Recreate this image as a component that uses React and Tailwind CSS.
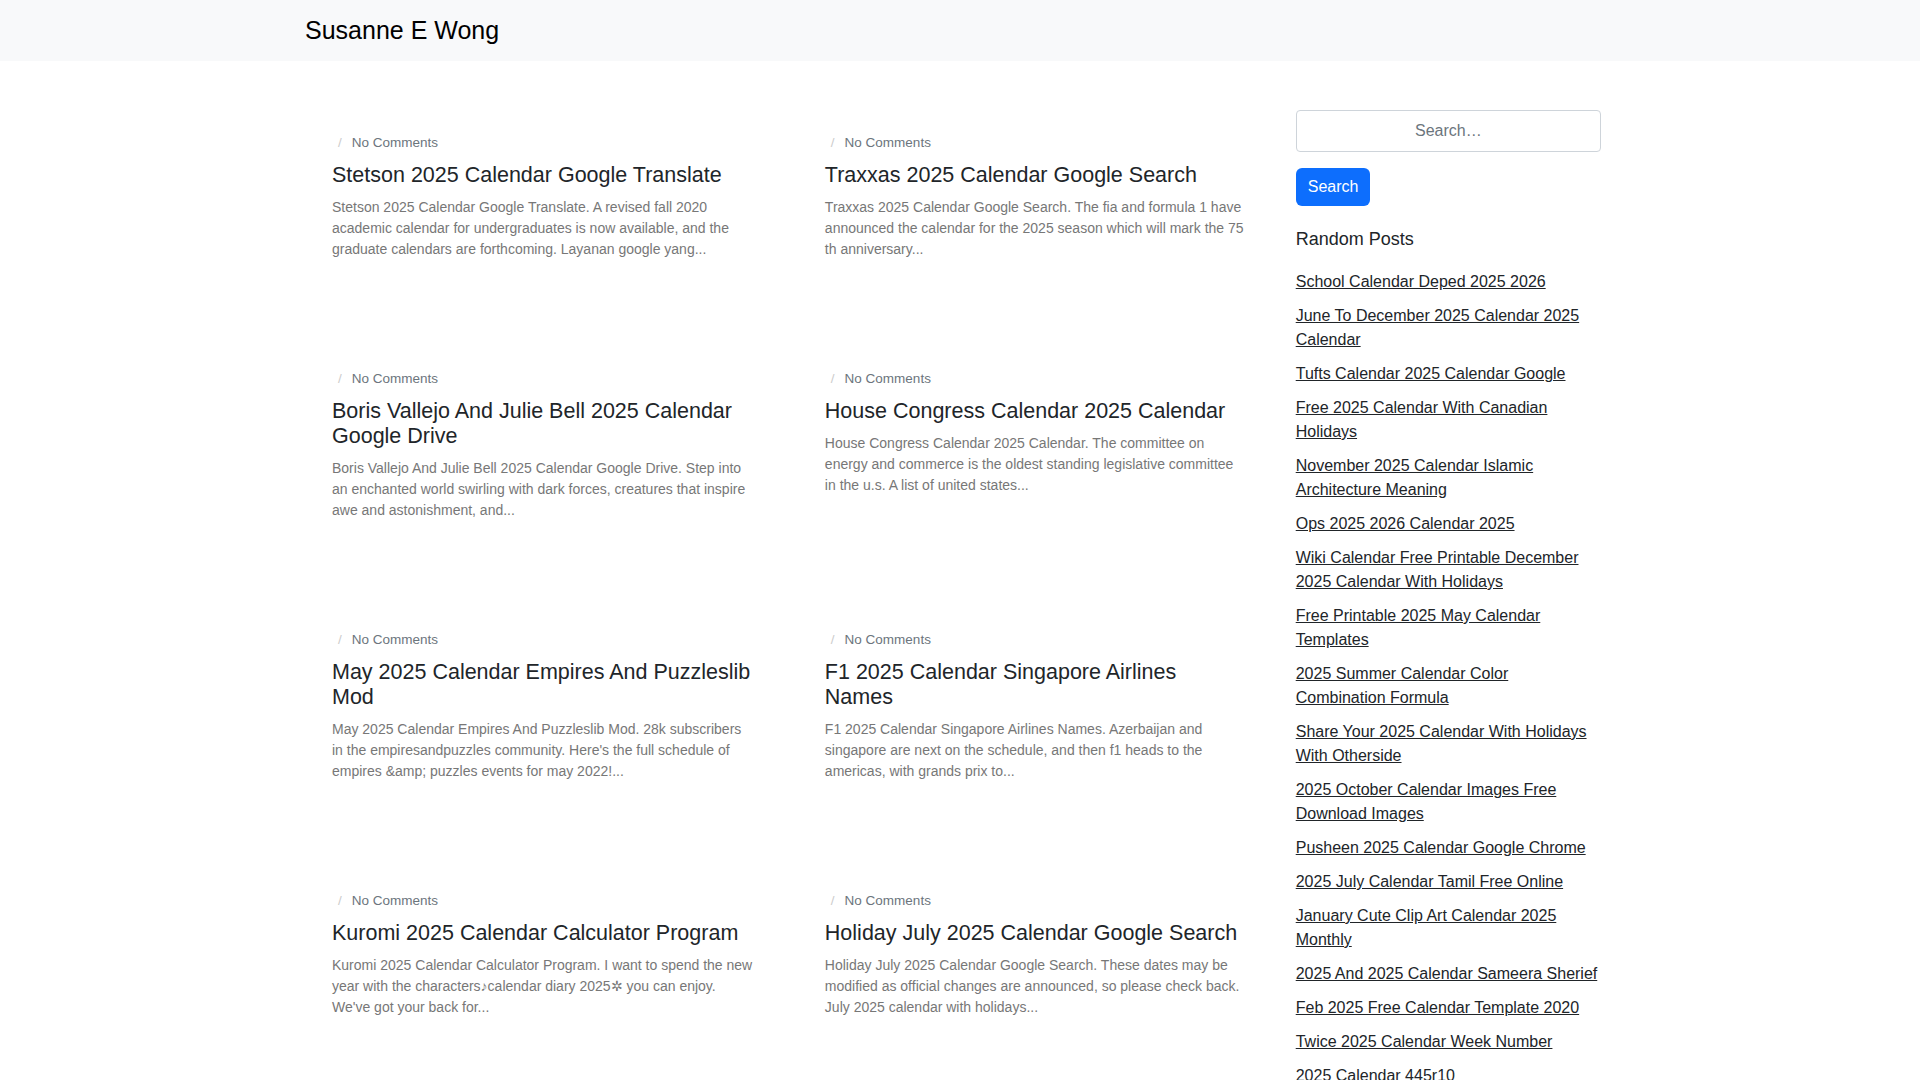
const posts = [
  ["Stetson 2025 Calendar Google Translate", "Stetson 2025 Calendar Google Translate. A revised fall 2020 academic calendar for undergraduates is now available, and the graduate calendars are forthcoming. Layanan google yang..."],
  ["Traxxas 2025 Calendar Google Search", "Traxxas 2025 Calendar Google Search. The fia and formula 1 have announced the calendar for the 2025 season which will mark the 75 th anniversary..."],
  ["Boris Vallejo And Julie Bell 2025 Calendar Google Drive", "Boris Vallejo And Julie Bell 2025 Calendar Google Drive. Step into an enchanted world swirling with dark forces, creatures that inspire awe and astonishment, and..."],
  ["House Congress Calendar 2025 Calendar", "House Congress Calendar 2025 Calendar. The committee on energy and commerce is the oldest standing legislative committee in the u.s. A list of united states..."],
  ["May 2025 Calendar Empires And Puzzleslib Mod", "May 2025 Calendar Empires And Puzzleslib Mod. 28k subscribers in the empiresandpuzzles community. Here's the full schedule of empires &amp; puzzles events for may 2022!..."],
  ["F1 2025 Calendar Singapore Airlines Names", "F1 2025 Calendar Singapore Airlines Names. Azerbaijan and singapore are next on the schedule, and then f1 heads to the americas, with grands prix to..."],
  ["Kuromi 2025 Calendar Calculator Program", "Kuromi 2025 Calendar Calculator Program. I want to spend the new year with the characters♪calendar diary 2025✲ you can enjoy. We've got your back for..."],
  ["Holiday July 2025 Calendar Google Search", "Holiday July 2025 Calendar Google Search. These dates may be modified as official changes are announced, so please check back. July 2025 calendar with holidays..."],
  ["", ""],
  ["", ""],
];
const links = [
  "School Calendar Deped 2025 2026",
  "June To December 2025 Calendar 2025 Calendar",
  "Tufts Calendar 2025 Calendar Google",
  "Free 2025 Calendar With Canadian Holidays",
  "November 2025 Calendar Islamic Architecture Meaning",
  "Ops 2025 2026 Calendar 2025",
  "Wiki Calendar Free Printable December 2025 Calendar With Holidays",
  "Free Printable 2025 May Calendar Templates",
  "2025 Summer Calendar Color Combination Formula",
  "Share Your 2025 Calendar With Holidays With Otherside",
  "2025 October Calendar Images Free Download Images",
  "Pusheen 2025 Calendar Google Chrome",
  "2025 July Calendar Tamil Free Online",
  "January Cute Clip Art Calendar 2025 Monthly",
  "2025 And 2025 Calendar Sameera Sherief",
  "Feb 2025 Free Calendar Template 2020",
  "Twice 2025 Calendar Week Number",
  "2025 Calendar 445r10",
  "Printable 2025 Calendar Free",
];
export default function App() {
  return (
    <div className="min-h-[1300px] bg-white text-[#212529]" style={{ fontFamily: '"Liberation Sans", Arial, sans-serif' }}>
      <header className="h-[61px] bg-[#f8f9fa]">
        <div className="w-[1310px] pr-[14px] mx-auto h-full flex items-center">
          <span className="text-[25px] text-black">Susanne E Wong</span>
        </div>
      </header>
      <div className="w-[1310px] pr-[14px] mx-auto flex">
        <main className="w-[988px] grid grid-cols-2 pt-[72px]">
          {posts.map(([t, e], i) => (
            <article key={i} className="pl-[27px] pr-[43px] pb-[109px]">
              <div className="text-[13.5px] text-[#6c757d] leading-[20px]">
                <span className="text-[#ccc] ml-[6px] mr-[10px]">/</span>No Comments
              </div>
              <h2 className="text-[21.5px] leading-[25px] mt-[10px] mb-[9px] text-[#212529]">{t}</h2>
              <p className="text-[14px] leading-[21px] text-[#777]">{e}</p>
            </article>
          ))}
        </main>
        <aside className="w-[306px] ml-[5px] pt-[49px]">
          <input placeholder="Search…" className="w-full h-[42px] border border-[#ced4da] rounded text-center text-[16px] placeholder-[#6c757d] outline-none" />
          <button className="mt-[16px] h-[38px] px-[12px] bg-[#0d6efd] text-white rounded-md text-[16px]">Search</button>
          <h3 className="text-[18px] mt-[20px] mb-[17px]">Random Posts</h3>
          <ul className="flex flex-col gap-[10px]">
            {links.map((l) => (
              <li key={l} className="text-[16px] leading-[24px]">
                <a href="#" className="underline text-[#212529]">{l}</a>
              </li>
            ))}
          </ul>
        </aside>
      </div>
    </div>
  );
}
